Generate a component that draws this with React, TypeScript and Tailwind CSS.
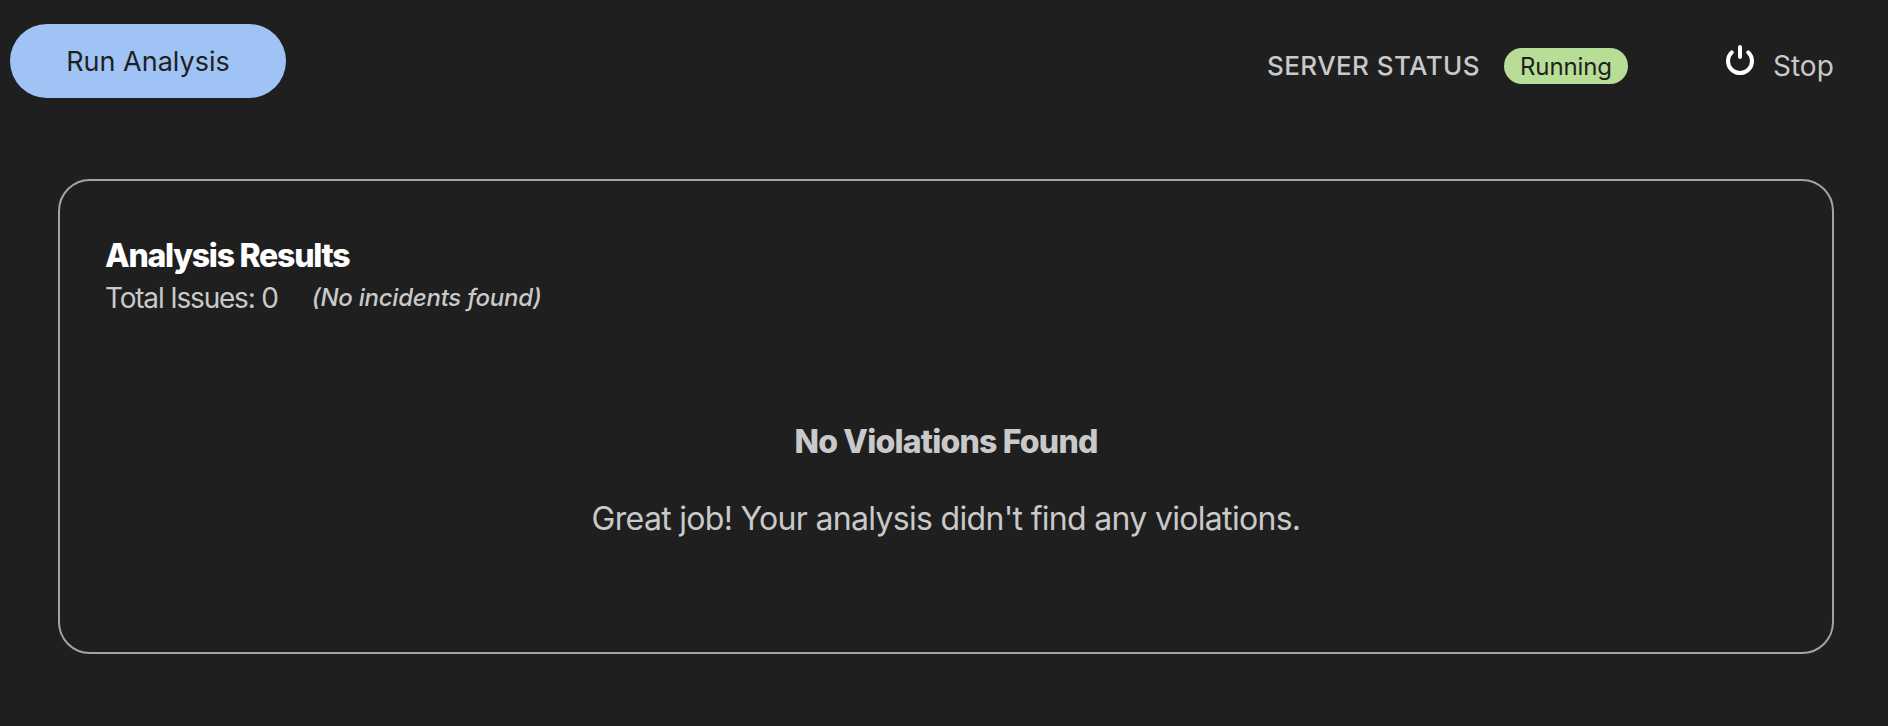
function PowerIcon() {
  return (
    <svg className="mb-3" width="28" height="30" viewBox="0 0 28 30" fill="none" stroke="#fff" strokeWidth="4" strokeLinecap="round">
      <path d="M14 2v10" />
      <path d="M5.7 7.4a12 12 0 1 0 16.6 0" />
    </svg>
  );
}

function Toolbar() {
  return (
    <header className="flex h-[98px] items-start pt-6 pl-2.5 pr-[54px]">
      <button className="flex h-[74px] w-[276px] items-center justify-center rounded-full bg-[#9fc3f5] pt-0.5 text-[27px] text-[#1f1f1f]">
        Run Analysis
      </button>
      <div className="ml-auto flex h-[84px] items-center">
        <span className="pb-0.5 text-[26px] font-medium tracking-[0.42px]">SERVER STATUS</span>
        <span className="ml-6 flex h-9 w-[124px] items-center justify-center rounded-full bg-[#b8dd97] pt-0.5 text-2xl tracking-[-0.1px] text-[#1f1f1f]">
          Running
        </span>
        <button className="ml-[98px] flex items-center gap-[19px]">
          <PowerIcon />
          <span className="w-[61px] text-left text-[28px]">Stop</span>
        </button>
      </div>
    </header>
  );
}

function ResultsCard() {
  return (
    <section className="mt-[81px] mr-[54px] ml-[58px] h-[475px] rounded-[32px] border-2 border-[#a3a3a3] px-[45px] pt-[54px]">
      <h2 className="text-[32px] leading-[42px] font-extrabold tracking-[-1.25px] text-white">Analysis Results</h2>
      <div className="flex items-start gap-[34px] leading-[42px]">
        <span className="text-[28px] tracking-[-1.2px]">Total Issues: 0</span>
        <em className="text-2xl leading-[42px] font-medium tracking-[-0.25px]">(No incidents found)</em>
      </div>
      <div className="mt-[102px] flex flex-col items-center">
        <h3 className="text-[32px] leading-[42px] font-extrabold tracking-[-0.8px]">No Violations Found</h3>
        <p className="mt-[35px] text-[32px] leading-[42px] tracking-[-0.69px]">Great job! Your analysis didn't find any violations.</p>
      </div>
    </section>
  );
}

export default function App() {
  return (
    <main className="h-[726px] w-full overflow-hidden bg-[#1f1f1f] font-['Inter','Liberation_Sans',sans-serif] whitespace-nowrap text-[#c9c9c9]">
      <Toolbar />
      <ResultsCard />
    </main>
  );
}
